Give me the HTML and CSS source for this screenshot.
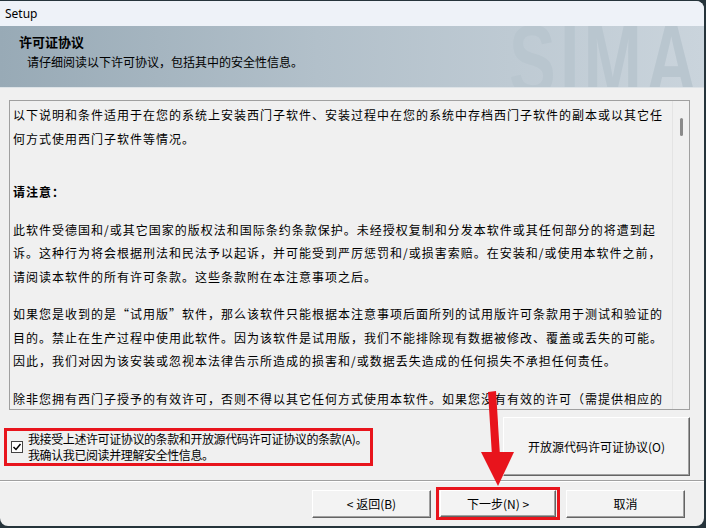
FILE: index.html
```html
<!DOCTYPE html>
<html lang="zh-CN">
<head>
  <meta charset="UTF-8">
  <title>Setup</title>
  <link rel="stylesheet" href="styles.css">
</head>
<body>

<div class="window">
  <div class="titlebar">Setup</div>

  <div class="banner">
    <div class="banner-title">许可证协议</div>
    <div class="banner-sub">请仔细阅读以下许可协议，包括其中的安全性信息。</div>
    <div class="brand">SIMA</div>
  </div>

  <div class="content">
    <div class="license">
      <div class="license-text">
        <p class="first">以下说明和条件适用于在您的系统上安装西门子软件、安装过程中在您的系统中存档西门子软件的副本或以其它任<br>何方式使用西门子软件等情况。</p>
        <p><b>请注意：</b></p>
        <p>此软件受德国和/或其它国家的版权法和国际条约条款保护。未经授权复制和分发本软件或其任何部分的将遭到起<br>诉。这种行为将会根据刑法和民法予以起诉，并可能受到严厉惩罚和/或损害索赔。在安装和/或使用本软件之前，<br>请阅读本软件的所有许可条款。这些条款附在本注意事项之后。</p>
        <p>如果您是收到的是“试用版”软件，那么该软件只能根据本注意事项后面所列的试用版许可条款用于测试和验证的<br>目的。禁止在生产过程中使用此软件。因为该软件是试用版，我们不能排除现有数据被修改、覆盖或丢失的可能。<br>因此，我们对因为该安装或忽视本法律告示所造成的损害和/或数据丢失造成的任何损失不承担任何责任。</p>
        <p>除非您拥有西门子授予的有效许可，否则不得以其它任何方式使用本软件。如果您没有有效的许可（需提供相应的</p>
      </div>
      <div class="scrollbar"><div class="thumb"></div></div>
    </div>

    <div class="accept-row">
      <label class="accept">
        <span class="check">
          <svg width="10" height="10" viewBox="0 0 10 10"><path d="M1.5 5 L4 7.5 L8.5 2" fill="none" stroke="#000" stroke-width="1.5"/></svg>
        </span>
        <span class="accept-text">我接受上述许可证协议的条款和开放源代码许可证协议的条款(A)。<br>我确认我已阅读并理解安全性信息。</span>
      </label>
      <button class="btn btn-oss">开放源代码许可证协议(O)</button>
    </div>

    <div class="separator"></div>

    <div class="nav">
      <button class="btn btn-nav">&lt; 返回(B)</button>
      <span class="mark"><button class="btn btn-next">下一步(N) &gt;</button></span>
      <button class="btn btn-nav">取消</button>
    </div>
  </div>

  <svg class="arrow" width="704" height="525" viewBox="0 1 704 525">
    <polygon points="488,392 496,391 500,456 492,456" fill="#e8141c"/>
    <polygon points="481,452 514,452 498,486" fill="#e8141c"/>
  </svg>
</div>

</body>
</html>
```

FILE: styles.css
```css
body {
  margin: 0;
  background-color: #26343b;
  font-family: "Noto Sans CJK SC", "Noto Sans", sans-serif;
  color: #000;
}

.window {
  position: relative;
  width: 704px;
  height: 525px;
  margin-top: 1px;
  background-color: #f0f0f0;
  border-radius: 0 8px 8px 8px;
  overflow: hidden;
}

.titlebar {
  height: 25px;
  line-height: 25px;
  padding-left: 5px;
  background-color: #eef2f8;
  font-family: "Noto Sans", sans-serif;
  font-size: 12px;
}

.banner {
  position: relative;
  height: 61px;
  border-bottom: 1px solid #dde3e7;
  background: linear-gradient(90deg, #98aab6 0%, #b2c0ca 45%, #cad4dc 100%);
  overflow: hidden;
}

.banner-title {
  position: relative;
  z-index: 1;
  padding: 7px 0 0 19px;
  font-size: 13px;
  font-weight: bold;
  line-height: 18px;
}

.banner-sub {
  position: relative;
  z-index: 1;
  margin-top: 2px;
  padding-left: 27px;
  font-size: 12px;
  line-height: 18px;
}

.brand {
  position: absolute;
  left: 509px;
  top: 4px;
  font-family: "Liberation Sans", sans-serif;
  font-size: 100px;
  font-weight: bold;
  line-height: 60px;
  letter-spacing: 6px;
  color: #b9c6cf;
  transform: scaleX(0.7);
  transform-origin: left top;
}

.content {
  padding: 12px 14px 0 9px;
}

.license {
  display: flex;
  height: 308px;
  border: 1px solid #a0a0a0;
  background-color: #f0f0f0;
}

.license-text {
  flex: 1;
  padding: 2px 0 0 3px;
  font-size: 12px;
  letter-spacing: 1px;
  line-height: 23.5px;
  white-space: nowrap;
  overflow: hidden;
}

.license-text p {
  margin: 0 0 14px;
}

.license-text p.first {
  margin-bottom: 30px;
}

.scrollbar {
  width: 16px;
  border-left: 1px solid #e4e4e4;
}

.thumb {
  width: 3px;
  height: 18px;
  margin: 17px auto 0;
  border-radius: 2px;
  background-color: #8a8a8a;
}

.accept-row {
  display: flex;
  justify-content: space-between;
  align-items: center;
  margin-top: 7px;
}

.accept {
  display: flex;
  align-items: center;
  margin-left: -5px;
  padding: 0 3px 0 4px;
  border: 3px solid #e8141c;
}

.check {
  display: flex;
  align-items: center;
  justify-content: center;
  width: 10px;
  height: 10px;
  margin-right: 5px;
  border: 1px solid #444;
  background-color: #fff;
}

.accept-text {
  font-size: 12px;
  letter-spacing: -0.4px;
  line-height: 16px;
}

.btn {
  font-family: "Noto Sans CJK SC", "Noto Sans", sans-serif;
  font-size: 12px;
  color: #000;
  background-color: #f3f3f3;
  border: 1px solid;
  border-color: #fff #646464 #646464 #fff;
  box-shadow: inset -1px -1px 0 #a0a0a0;
  padding: 0;
}

.btn-oss {
  width: 187px;
  height: 59px;
}

.separator {
  margin: 4px -14px 0 -9px;
  border-top: 1px solid #a0a0a0;
  border-bottom: 1px solid #fff;
}

.nav {
  display: flex;
  justify-content: flex-end;
  align-items: center;
  margin-top: 5px;
  padding-right: 5px;
}

.btn-nav {
  width: 119px;
  height: 28px;
}

.mark {
  display: flex;
  margin: 0 6px 0 5px;
  padding: 0 1px;
  border: 3px solid #e8141c;
}

.btn-next {
  width: 116px;
  height: 27px;
}

.arrow {
  position: absolute;
  left: 0;
  top: 0;
  pointer-events: none;
}
```
